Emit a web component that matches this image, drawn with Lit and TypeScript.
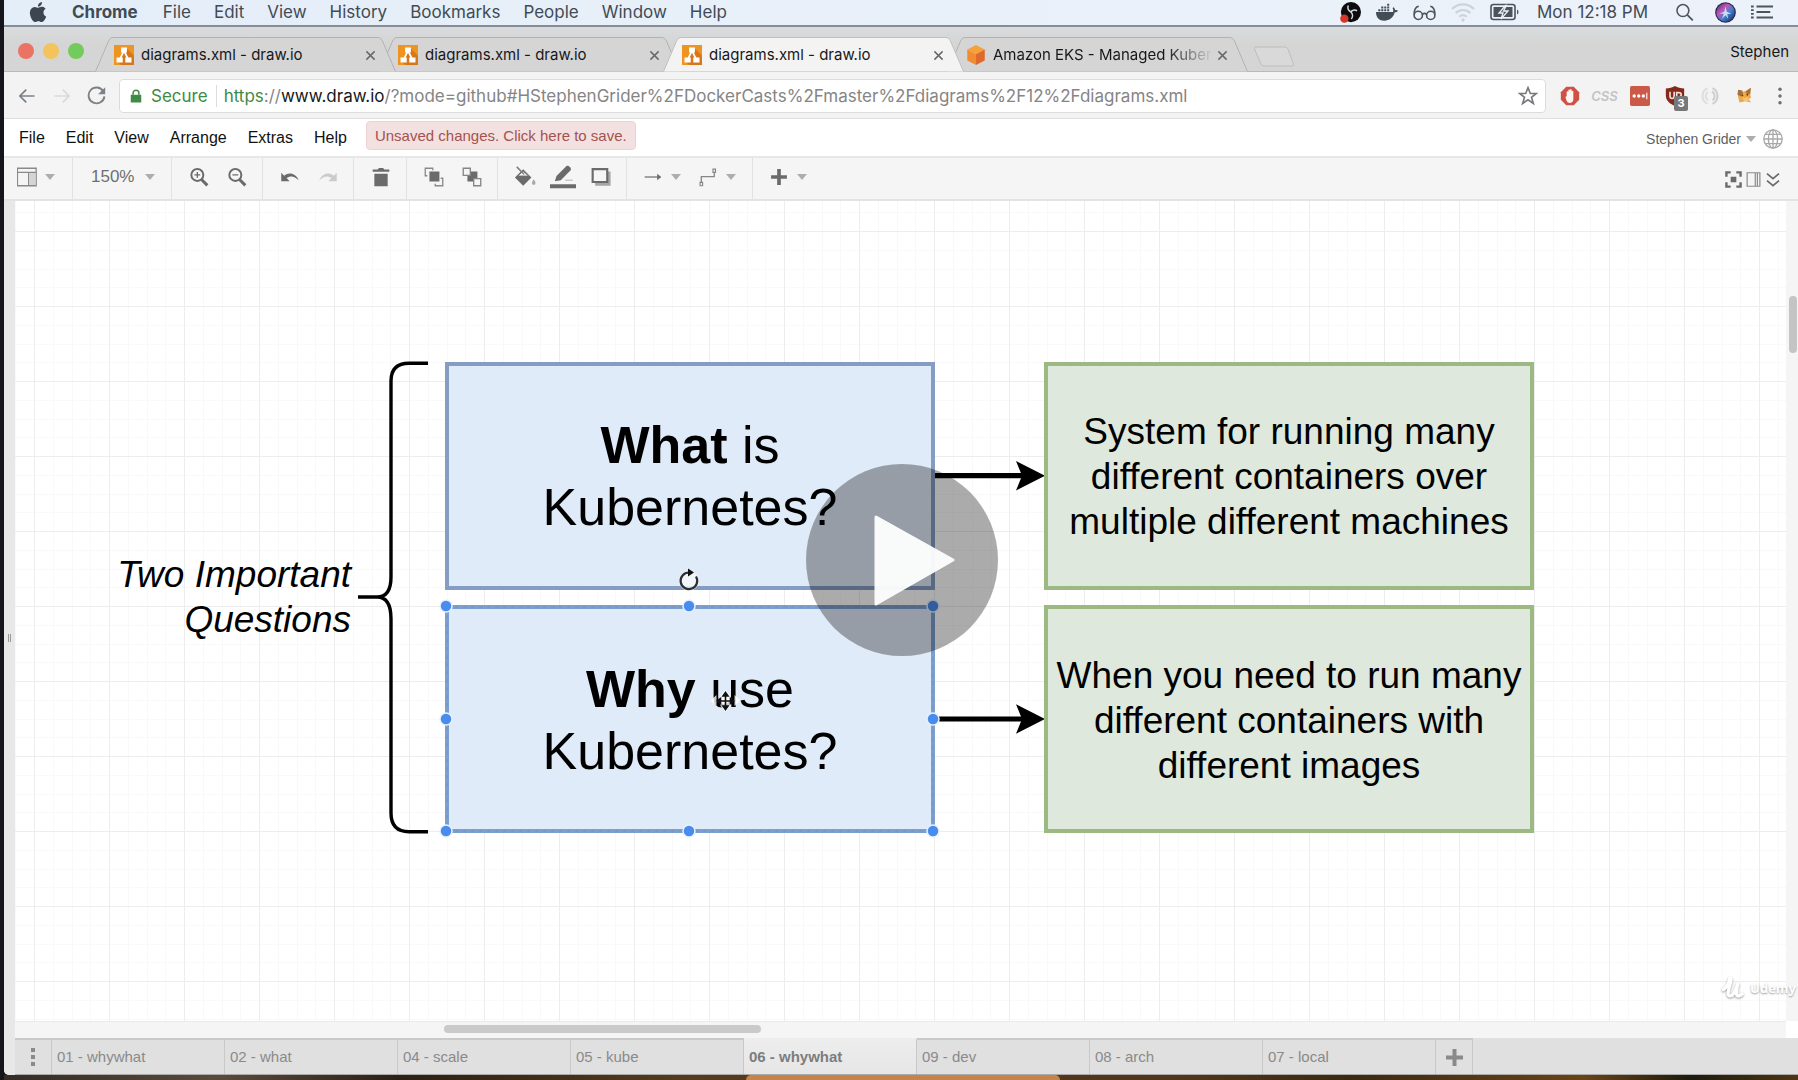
import { LitElement, html, svg, css } from "lit";
import { customElement } from "lit/decorators.js";
import { classMap } from "lit/directives/class-map.js";

const caret = html`<svg class="caret" viewBox="0 0 12 8" aria-hidden="true"><path d="M1 1h10L6 7z" fill="#adadad" /></svg>`;

const icon = (size: number, body: unknown) =>
  html`<svg width=${size} height=${size} viewBox="0 0 24 24" fill="none" aria-hidden="true">${body}</svg>`;

const G = "#6b6b6b";

const icons = {
  apple: svg`<path fill="#3d4650" d="M12.152 6.896c-.948 0-2.415-1.078-3.96-1.04-2.04.027-3.91 1.183-4.961 3.014-2.117 3.675-.546 9.103 1.519 12.09 1.013 1.454 2.208 3.09 3.792 3.039 1.52-.065 2.09-.987 3.935-.987 1.831 0 2.35.987 3.96.948 1.637-.026 2.676-1.48 3.676-2.948 1.156-1.688 1.636-3.325 1.662-3.415-.039-.013-3.182-1.221-3.22-4.857-.026-3.04 2.48-4.494 2.597-4.559-1.429-2.09-3.623-2.324-4.39-2.376-2-.156-3.675 1.09-4.61 1.09zM15.53 3.83c.843-1.012 1.4-2.427 1.245-3.83-1.207.052-2.662.805-3.532 1.818-.78.896-1.454 2.338-1.273 3.714 1.338.104 2.715-.688 3.559-1.701" />`,
  obs: svg`<circle cx="12.500" cy="11.500" r="11.500" fill="#0c0c0e" /><path d="M9.500 4c-1.500 3 0 6 3 7.500M19.500 10c-3-1.500-6-.5-7 1.500M13 19.500c2-2.500 1.500-6-.5-8" stroke="#d5d9de" stroke-width="1.800" /><circle cx="5" cy="19" r="4.800" fill="#d8352a" />`,
  docker: svg`<path fill="#434d57" d="M0 12h18.600c.5-1.500.3-3-.6-4l1-1.200c1.200.8 1.700 1.800 1.800 3 1.200-.2 2.300 0 3.200.8-.7 1.200-2 1.800-3.500 1.800C18.800 18.500 14.500 21.500 9 21.500 3.500 21.500 0 18.500 0 12z" /><path stroke="#434d57" stroke-width="2.200" d="M2.500 10h2.300M5.700 10H8M9 10h2.200M12.200 10h2.200M5.700 7H8M9 7h2.200M12.200 7h2.200M12.200 4h2.200" />`,
  glasses: svg`<g stroke="#4b545d" stroke-width="1.700"><circle cx="5.500" cy="15" r="4.300" /><circle cx="18.500" cy="15" r="4.300" /><path d="M9.800 14c1.200-1.200 3.200-1.200 4.400 0M1.200 14c0-4 1.500-8 4.800-8.500M22.800 14c0-4-1.500-8-4.800-8.500" /></g>`,
  wifi: svg`<g stroke="#cdd3da" stroke-width="2.200"><path d="M1 9c6.500-6.200 15.500-6.200 22 0M4.700 13c4.300-4 10.300-4 14.600 0M8.300 16.800c2.200-2 5.200-2 7.400 0" /></g><path d="M12 17.800l2 2.200-2 2.200-2-2.200z" fill="#cdd3da" />`,
  search: svg`<circle cx="10" cy="9.500" r="7.500" stroke="#4f5860" stroke-width="2" /><path d="M15.500 15l7 7" stroke="#4f5860" stroke-width="2.300" />`,
  siri: svg`<defs><linearGradient id="s" x1="0" y1="0" x2="1" y2="1"><stop offset="0" stop-color="#3b2a6b" /><stop offset=".35" stop-color="#c158b8" /><stop offset=".6" stop-color="#3f7fd0" /><stop offset="1" stop-color="#1c2350" /></linearGradient></defs><circle cx="12" cy="12" r="11.800" fill="#23244a" /><circle cx="12" cy="12" r="10.500" fill="url(#s)" /><path d="M12 5l1.500 6 5.500 2.500-5 .2 1 5.500L12 15l-4 4 2-5.500-5-.5 5.500-2z" fill="#d8f0fb" opacity=".85" />`,
  list: svg`<path d="M6 6h18M6 12h15M6 18h18" stroke="#4b545d" stroke-width="2.400" /><path d="M0 6h3M0 10h3M0 14h3M0 18h3" stroke="#4b545d" stroke-width="2" />`,
  back: svg`<path d="M22 12H3M11 3.500L2.500 12l8.500 8.500" stroke="#7d8186" stroke-width="2.300" />`,
  forward: svg`<path d="M2 12h19M13 3.500l8.500 8.500-8.500 8.500" stroke="#dadada" stroke-width="2.300" />`,
  reload: svg`<path d="M20.500 6.500A10 10 0 1 0 22 13" stroke="#7d8186" stroke-width="2.400" /><path d="M23 1.500v9h-9z" fill="#7d8186" />`,
  lock: svg`<path d="M3 10h18v13H3z" fill="#3f8a44" /><path d="M7 10V7a5 5 0 0 1 10 0v3" stroke="#3f8a44" stroke-width="2.600" />`,
  star: svg`<path d="M12 2l2.800 7h7.200l-5.800 4.500 2.200 7.500-6.400-4.500-6.400 4.500 2.200-7.500L2 9h7.200z" stroke="#77797c" stroke-width="2" />`,
  adblock: svg`<path d="M7.500 1h9L23 7.500v9L16.500 23h-9L1 16.500v-9z" fill="#cf5145" /><path d="M6.500 13l1.500-.8V7.500c0-1.500 2-1.500 2 0V5.200c0-1.500 2-1.500 2 0v-.5c0-1.500 2-1.500 2 0v2c0-1.500 2-1.500 2 0V16c0 3-2 4.500-4.500 4.500C8.500 20.500 7.500 17 6.500 13z" fill="#fdf3f1" />`,
  dots3: svg`<rect x="0" y="0" width="24" height="24" rx="2" fill="#cb5a49" /><g fill="#fff"><circle cx="5" cy="12" r="2" /><circle cx="10.500" cy="12" r="2" /><circle cx="16" cy="12" r="2" /><path d="M19.500 8h1.300v8h-1.300z" /></g>`,
  shield: svg`<path d="M12 0c3 2 7 3 11 3v8c0 6-4 10-11 13C5 21 1 17 1 11V3c4 0 8-1 11-3z" fill="#86281b" /><path d="M6 7v5c0 4 5 4 5 0V7M14 16V8h2.500c4 0 4 5 0 5H14" stroke="#f0dcd8" stroke-width="2" />`,
  swirl: svg`<path d="M9 2.500C1 6.500 1 17.500 9 21.500M9.500 7c-4 3-3.500 8 .5 10.500" stroke="#dedede" stroke-width="2.500" /><path d="M15 2.500c8 4 8 15 0 19M14.500 6.500c4 3 4 8 .5 11" stroke="#cfcfcf" stroke-width="2.500" />`,
  fox: svg`<path d="M3 5l6 2 6-2 6-4-1 8 1 6-3 2 3 5-8-2-8 2-2-8z" fill="#eda945" /><path d="M3 4l6 1 1 6-4 2-4-2zM14 6l7-5-1 9-5 1z" fill="#a8713c" /><path d="M8 14l4 2 5-2 1 5-6 1z" fill="#f4c67c" /><circle cx="9" cy="12" r="1.200" fill="#4b3a2a" /><circle cx="16" cy="11" r="1.200" fill="#4b3a2a" />`,
  more: svg`<g fill="#6c6f73"><circle cx="12" cy="3" r="2.300" /><circle cx="12" cy="12" r="2.300" /><circle cx="12" cy="21" r="2.300" /></g>`,
  globe: svg`<g stroke="#a9a9a9" stroke-width="1.600"><circle cx="12" cy="12" r="11" /><ellipse cx="12" cy="12" rx="5.500" ry="11" /><path d="M12 1v22M1 12h22M3 6.500h18M3 17.500h18" /></g>`,
  close: svg`<path d="M3 3l18 18M21 3L3 21" stroke="#66696c" stroke-width="3.200" />`,
  drawio: svg`<path d="M0 0h24v24H0z" fill="#ee9420" /><path d="M15 4l9 9v11H9l-6-5z" fill="#d8771a" /><path d="M12 7L7 17M12 7l5 10" stroke="#fff" stroke-width="2.200" /><path d="M8.500 3h7v6h-7zM3 15h7.500v6H3zM13.500 15H21v6h-7.500z" fill="#fff" />`,
  cube: svg`<path d="M12 0l10.500 5.500L12 11 1.500 5.500z" fill="#f6a13a" /><path d="M1.500 5.500L12 11v13L1.500 18.500z" fill="#f28c33" /><path d="M22.500 5.500L12 11v13l10.500-5.500z" fill="#dd6a2c" />`,
  sidebar: svg`<path d="M.5 1.500h22.500v21H.5zM.5 6.500H23M14 6.500v16" stroke="#8a8a8a" stroke-width="1.600" /><path d="M14.800 7.300h7.400v14.400h-7.400z" fill="#d5d5d5" />`,
  zoomIn: svg`<circle cx="10" cy="9.500" r="7.200" stroke="${G}" stroke-width="2.400" /><path d="M15 15l7 7" stroke="${G}" stroke-width="3.600" /><path d="M10 6v7M6.500 9.500h7" stroke="${G}" stroke-width="1.600" />`,
  zoomOut: svg`<circle cx="10" cy="9.500" r="7.200" stroke="${G}" stroke-width="2.400" /><path d="M15 15l7 7" stroke="${G}" stroke-width="3.600" /><path d="M6.500 9.500h7" stroke="${G}" stroke-width="1.600" />`,
  undo: svg`<path d="M1.500 7v10h10l-3.600-3.700c4.500-3.300 9.500-2.500 14.600 2.700C19 7.500 11 5.500 5 10.500z" fill="${G}" />`,
  redo: svg`<path d="M22.500 7v10h-10l3.600-3.700C11.600 10 6.600 10.800 1.500 16 5 7.500 13 5.500 19 10.500z" fill="#cbcbcb" />`,
  trash: svg`<path d="M4 8h16v15H4zM2 3h6l1.500-1.800h5L16 3h6v2.600H2z" fill="${G}" />`,
  front: svg`<path d="M6.500 5.500h12v12h-12z" fill="${G}" /><path d="M4 10.500H1.500v-9h9V4M20 13.500h2.500v9h-9V20" stroke="#8a8a8a" stroke-width="1.600" />`,
  toBack: svg`<path d="M6.500 5.500h12v12h-12z" fill="${G}" /><path d="M1.500 1.500h8.500V10H1.500zM14 14h8.500v8.500H14z" fill="#f5f5f5" stroke="#858585" stroke-width="1.600" />`,
  bucket: svg`<path d="M10 3.500L19 12.500 10 21.500 1 12.500z" fill="${G}" /><path d="M10 5.500l6 5.500H4z" fill="#f0f0f0" stroke="${G}" stroke-width="1" /><path d="M3 1l8 8" stroke="#7f7f7f" stroke-width="1.700" /><path d="M21.500 14.500c3 4 2 6 0 6s-3-2 0-6z" fill="#a9a9a9" />`,
  pencil: svg`<path d="M4.500 16l1.500-5L15 2c1.500-1.500 5.500 1.500 4 3.700L10 15z" fill="${G}" /><path d="M14 15h7" stroke="#c9c9c9" stroke-width="1.500" /><path d="M0 20.500h24" stroke="${G}" stroke-width="3.600" />`,
  shadow: svg`<path d="M5 5.500h18.500v17H5z" fill="#a6a6a6" /><path d="M2 2.500h17.500v15.500H2z" fill="#f5f5f5" stroke="${G}" stroke-width="2.600" />`,
  arrow: svg`<path d="M2 12h17" stroke="#868686" stroke-width="1.600" /><path d="M17 8l5 4-5 4z" fill="${G}" />`,
  waypoint: svg`<path d="M4 19v-7.500h15.500V6" stroke="#868686" stroke-width="1.600" /><path d="M2.500 18.500h3v4h-3zM18 2.500h3v4h-3z" stroke="#868686" stroke-width="1.400" />`,
  plus: svg`<path d="M12 2.500v19M2.500 12h19" stroke="${G}" stroke-width="4.400" />`,
  full: svg`<path d="M2 8V2h6M16 2h6v6M22 16v6h-6M8 22H2v-6" stroke="${G}" stroke-width="3.400" /><path d="M8 8h8v8H8z" fill="${G}" />`,
  panel: svg`<path d="M3 2.500h18v19H3zM14.500 2.500v19M17.500 2.500v19" stroke="#8a8a8a" stroke-width="1.700" />`,
  chevrons: svg`<path d="M3 2.500l9 7.500 9-7.500M3 13l9 7.500 9-7.500" stroke="${G}" stroke-width="2.600" />`,
};

const TABS = [
  { title: "diagrams.xml - draw.io", icon: icons.drawio },
  { title: "diagrams.xml - draw.io", icon: icons.drawio },
  { title: "diagrams.xml - draw.io", icon: icons.drawio, active: true },
  { title: "Amazon EKS - Managed Kuber", icon: icons.cube, fade: true },
];

const PAGES = ["01 - whywhat", "02 - what", "04 - scale", "05 - kube", "06 - whywhat", "09 - dev", "08 - arch", "07 - local"];

@customElement("mac-menubar")
class MacMenubar extends LitElement {
  static styles = css`
    :host { display: block; }
    .bar {
      display: flex; align-items: center; height: 25px; box-sizing: content-box; padding: 0 25px 0 24px;
      background: linear-gradient(90deg, #e4eef8, #edf2fa); border-bottom: 2px solid #858d96;
      font: 17px/22px Inter, sans-serif; color: #414b55;
    }
    .menus { display: flex; gap: 23px; flex: 1; margin-left: 24px; }
    button { border: 0; padding: 0 0 1px; background: none; font: inherit; color: inherit; display: flex; align-items: center; }
    .app { font-weight: 700; margin-right: 2px; }
    .status { display: flex; align-items: center; gap: 15px; }
    .clock { margin: 0 12px 0 2px; padding-bottom: 1px; }
    .find { margin-right: 6px; }
  `;
  render() {
    return html`<header class="bar">
      <button aria-label="Apple menu">${icon(20, icons.apple)}</button>
      <nav class="menus">
        ${["Chrome", "File", "Edit", "View", "History", "Bookmarks", "People", "Window", "Help"].map(
          (m, i) => html`<button class=${classMap({ app: i === 0 })}>${m}</button>`
        )}
      </nav>
      <div class="status">
        <button aria-label="Recorder">${icon(21, icons.obs)}</button>
        <button aria-label="Docker">${icon(22, icons.docker)}</button>
        <button aria-label="Reading mode">${icon(23, icons.glasses)}</button>
        <button aria-label="Wi-Fi">${icon(24, icons.wifi)}</button>
        <button aria-label="Battery">
          <svg width="30" height="18" viewBox="0 0 30 18" fill="none">
            <rect x="1" y="1.500" width="24" height="15" rx="2.500" stroke="#4b545d" stroke-width="1.600" />
            <path d="M3.500 4h19v10h-19z" fill="#4b545d" />
            <path d="M15.500 2.500l-6.500 7.500h4l-2 6 7-8h-4.500l3-5.500z" fill="#4b545d" stroke="#e9f0f9" stroke-width="1.300" />
            <path d="M27 6.500c2 1 2 4 0 5z" fill="#4b545d" />
          </svg>
        </button>
        <span class="clock">Mon 12:18 PM</span>
        <button class="find" aria-label="Spotlight">${icon(19, icons.search)}</button>
        <button aria-label="Siri">${icon(21, icons.siri)}</button>
        <button aria-label="Notifications">${icon(22, icons.list)}</button>
      </div>
    </header>`;
  }
}

@customElement("browser-chrome")
class BrowserChrome extends LitElement {
  static styles = css`
    :host { display: block; font-family: Inter, sans-serif; }
    button { border: 0; padding: 0; background: none; display: flex; align-items: center; justify-content: center; font: inherit; color: inherit; }
    .strip {
      display: flex; align-items: flex-end; height: 44px; padding-right: 9px; border-bottom: 1px solid #b9b9b9;
      background: linear-gradient(#d9dbdd, #d5d5d5 40%); position: relative; border-radius: 5px 0 0 0;
    }
    .lights { display: flex; gap: 9px; align-self: center; padding: 3px 11px 0 14px; }
    .light { width: 16px; height: 16px; border-radius: 50%; }
    .red { background: #eb7366; } .amber { background: #f3c45b; } .green { background: #74cb5d; }
    .tab { position: relative; display: flex; align-items: center; box-sizing: border-box; width: 301px; height: 35px; margin: 0 -17px -1px 0; padding: 1px 18px 0 19px; z-index: 1; }
    .tab.first { z-index: 2; }
    .tab.active { z-index: 3; }
    .shape { position: absolute; inset: 0; width: 100%; height: 100%; fill: #d5d5d5; stroke: #b2b2b2; }
    .active .shape { fill: #f3f3f3; stroke: #c0c0c0; }
    .title, .fav, .close { position: relative; }
    .fav { display: flex; margin-right: 7px; }
    .title { flex: 1; font-size: 15px; line-height: 20px; color: #16181a; white-space: nowrap; }
    .fade .title { -webkit-mask-image: linear-gradient(90deg, #000 78%, transparent 100%); mask-image: linear-gradient(90deg, #000 78%, transparent 100%); }
    .close { width: 16px; height: 20px; }
    .newtab { margin: 0 0 3px 22px; }
    .profile { margin: 0 0 9px auto; font-size: 15px; line-height: 20px; color: #16181a; }
    .bar { display: flex; align-items: center; box-sizing: border-box; height: 47px; background: #f3f3f3; border-bottom: 1px solid #dedede; padding: 1px 1px 0 5px; }
    .nav { width: 35px; height: 34px; }
    .omni { flex: 1; display: flex; align-items: center; min-width: 0; height: 32px; margin: 0 6px 0 5px; border: 1px solid #dcdcdc; border-radius: 4px; background: #fff; padding: 0 7px 0 9px; font-size: 17px; line-height: 24px; }
    .secure { display: flex; align-items: center; gap: 8px; color: #3f8a44; padding-right: 8px; margin-right: 7px; border-right: 1px solid #dcdcdc; height: 22px; }
    .url { flex: 1; color: #858585; white-space: nowrap; overflow: hidden; outline: 0; }
    .scheme { color: #3f8a44; }
    .host { color: #16181a; }
    .ext { position: relative; width: 35px; height: 34px; }
    .css { font-size: 13px; font-style: italic; font-weight: 600; color: #c3c3c3; }
    .badge { position: absolute; left: 17px; top: 17px; width: 14px; height: 15px; border-radius: 2px; background: #777; color: #fff; font: bold 11px/15px Inter, sans-serif; text-align: center; }
  `;
  render() {
    return html`
      <div class="strip">
        <div class="lights"><span class="light red"></span><span class="light amber"></span><span class="light green"></span></div>
        ${TABS.map(
          (t, i) => html`<div class=${classMap({ tab: true, first: i === 0, active: !!t.active, fade: !!t.fade })}>
            <svg class="shape" viewBox="0 0 301 35" preserveAspectRatio="none"><path d="M.5 34.500L14 3Q15.500 .5 18 .5H283Q285.500 .5 287 3L300.500 34.500" /></svg>
            <span class="fav">${icon(20, t.icon)}</span>
            <span class="title">${t.title}</span>
            <button class="close" aria-label="Close tab">${icon(11, icons.close)}</button>
          </div>`
        )}
        <button class="newtab" aria-label="New tab">
          <svg width="42" height="22" viewBox="0 0 42 22"><path d="M3 1h29q2 0 3 2l5.500 15q.5 2-1.500 2H11q-2 0-3-2L1.500 3Q1 1 3 1z" fill="#d9d9d9" stroke="#bdbdbd" /></svg>
        </button>
        <button class="profile">Stephen</button>
      </div>
      <div class="bar">
        <button class="nav" aria-label="Back">${icon(18, icons.back)}</button>
        <button class="nav" aria-label="Forward">${icon(18, icons.forward)}</button>
        <button class="nav" aria-label="Reload">${icon(19, icons.reload)}</button>
        <div class="omni">
          <span class="secure">${icon(14, icons.lock)}Secure</span>
          <div class="url" role="textbox" aria-label="Address" contenteditable="true"><span class="scheme">https</span>://<span class="host">www.draw.io</span>/?mode=github#HStephenGrider%2FDockerCasts%2Fmaster%2Fdiagrams%2F12%2Fdiagrams.xml</div>
          <button aria-label="Bookmark">${icon(20, icons.star)}</button>
        </div>
        <button class="ext" aria-label="Ad blocker">${icon(20, icons.adblock)}</button>
        <button class="ext css">CSS</button>
        <button class="ext" aria-label="Passwords">${icon(20, icons.dots3)}</button>
        <button class="ext" aria-label="Shield">${icon(20, icons.shield)}<span class="badge">3</span></button>
        <button class="ext" aria-label="Sync">${icon(20, icons.swirl)}</button>
        <button class="ext" aria-label="Cat">${icon(17, icons.fox)}</button>
        <button class="ext" aria-label="More">${icon(18, icons.more)}</button>
      </div>`;
  }
}

@customElement("editor-bars")
class EditorBars extends LitElement {
  static styles = css`
    :host { display: block; font-family: "Liberation Sans", Arial, sans-serif; }
    button { border: 0; padding: 0; background: none; display: flex; align-items: center; justify-content: center; font: inherit; color: inherit; }
    .caret { width: 12px; height: 8px; }
    .menu { display: flex; align-items: center; height: 37px; padding: 0 15px; background: #fff; border-bottom: 2px solid #e7e7e7; font-size: 16px; line-height: 20px; color: #111; }
    nav { display: flex; gap: 21px; }
    .save { align-self: flex-start; margin: 2px 0 0 19px; height: 29px; padding: 0 8px; border: 1px solid #ecd3d3; border-radius: 4px; background: #f2e1e0; color: #a5524f; font-size: 15px; }
    .user { margin-left: auto; padding-top: 2px; gap: 4px; font-size: 14px; color: #5f5f5f; }
    .lang { margin-left: 6px; padding-top: 2px; }
    .tools { display: flex; height: 41px; background: #f5f5f5; border-bottom: 2px solid #e3e3e3; }
    .group { display: flex; align-items: center; padding: 0 6px 4px 8px; border-right: 1px solid #e2e2e2; }
    .tool { width: 38px; height: 36px; }
    .drops { padding: 0 15px 4px 14px; gap: 14px; }
    .layout { padding-left: 11px; padding-right: 16px; }
    .last { border: 0; }
    .drop { gap: 5px; height: 36px; }
    .drop svg:first-child { margin: 0 2px; }
    .scale { padding: 0 15px 4px 18px; gap: 9px; }
    select { appearance: none; border: 0; padding: 0; margin: 0; background: none; font: 17px/22px "Liberation Sans", Arial, sans-serif; color: #6f6f6f; }
    .right { display: flex; align-items: center; gap: 3px; margin: 2px 17px 0 auto; }
  `;
  private tool(label: string, body: unknown, size = 20) {
    return html`<button class="tool" aria-label=${label}>${icon(size, body)}</button>`;
  }
  private drop(label: string, body: unknown) {
    return html`<button class="drop" aria-label=${label}>${icon(20, body)}${caret}</button>`;
  }
  render() {
    return html`
      <div class="menu">
        <nav>${["File", "Edit", "View", "Arrange", "Extras", "Help"].map((m) => html`<button>${m}</button>`)}</nav>
        <button class="save">Unsaved changes. Click here to save.</button>
        <button class="user">Stephen Grider ${caret}</button>
        <button class="lang" aria-label="Language">${icon(20, icons.globe)}</button>
      </div>
      <div class="tools">
        <div class="group drops layout">${this.drop("View", icons.sidebar)}</div>
        <div class="group scale"><select aria-label="Zoom"><option>150%</option></select>${caret}</div>
        <div class="group">${this.tool("Zoom in", icons.zoomIn)}${this.tool("Zoom out", icons.zoomOut)}</div>
        <div class="group">${this.tool("Undo", icons.undo)}${this.tool("Redo", icons.redo)}</div>
        <div class="group">${this.tool("Delete", icons.trash)}</div>
        <div class="group">${this.tool("To front", icons.front)}${this.tool("To back", icons.toBack)}</div>
        <div class="group">${this.tool("Fill colour", icons.bucket, 22)}${this.tool("Line colour", icons.pencil, 26)}${this.tool("Shadow", icons.shadow)}</div>
        <div class="group drops">${this.drop("Connection", icons.arrow)}${this.drop("Waypoints", icons.waypoint)}</div>
        <div class="group drops last">${this.drop("Insert", icons.plus)}</div>
        <div class="right">
          <button aria-label="Fullscreen">${icon(17, icons.full)}</button>
          <button aria-label="Format panel">${icon(17, icons.panel)}</button>
          <button aria-label="Collapse">${icon(16, icons.chevrons)}</button>
        </div>
      </div>`;
  }
}

@customElement("diagram-canvas")
class DiagramCanvas extends LitElement {
  static styles = css`
    :host { display: block; position: relative; overflow: hidden; background: #fff; font-family: "Liberation Sans", Arial, sans-serif; color: #000; }
    .layer { position: absolute; inset: 0; width: 100%; height: 100%; }
    .node { position: absolute; box-sizing: border-box; width: 490px; height: 228px; border: 4px solid; display: flex; align-items: center; justify-content: center; text-align: center; }
    .ask { left: 430px; background: #e0ebf9; border-color: #859dc3; font-size: 52px; line-height: 62px; }
    .answer { left: 1029px; background: #dee8dc; border-color: #9cb982; font-size: 37px; line-height: 45px; }
    .one { top: 161px; }
    .two { top: 404px; padding-top: 2px; }
    .picked { border-color: #7a9fd2; }
    .label { position: absolute; left: 85px; top: 351px; width: 251px; text-align: right; font-size: 37px; line-height: 45px; font-style: italic; }
    .play { position: absolute; left: 791px; top: 263px; width: 192px; height: 192px; border: 0; padding: 0; border-radius: 50%; background: rgba(0, 0, 0, 0.33); }
  `;
  render() {
    const handles = [
      [431, 405], [674, 405], [918, 405],
      [431, 518], [918, 518],
      [431, 630], [674, 630], [918, 630],
    ];
    return html`
      <svg class="layer" aria-hidden="true">
        <defs>
          <pattern id="grid" x="19" y="30" width="75" height="75" patternUnits="userSpaceOnUse">
            <path d="M19.500 0v75M38.500 0v75M56.500 0v75M0 19.500h75M0 38.500h75M0 56.500h75" stroke="#f9f9f9" />
            <path d="M.5 0v75M0 .5h75" stroke="#ededed" />
          </pattern>
        </defs>
        <rect width="100%" height="100%" fill="url(#grid)" />
        <path d="M413 162.300H394Q376 162.300 376 180V376Q376 396 362 396H343M362 396Q376 396 376 418V612Q376 630.700 394 630.700H413" fill="none" stroke="#000" stroke-width="3.400" />
        <path d="M920 274.700H1010M920 518H1010" stroke="#000" stroke-width="5.200" />
        <path d="M1030 274.700L1001 289.500L1007 274.700L1001 260zM1030 518L1001 532.800L1007 518L1001 503.300z" />
      </svg>
      <div class="label">Two Important Questions</div>
      <div class="node ask one"><div><b>What</b> is<br />Kubernetes?</div></div>
      <div class="node ask two picked"><div><b>Why</b> use<br />Kubernetes?</div></div>
      <div class="node answer one"><div>System for running many<br />different containers over<br />multiple different machines</div></div>
      <div class="node answer two"><div>When you need to run many<br />different containers with<br />different images</div></div>
      <svg class="layer" aria-hidden="true">
        <rect x="432" y="406" width="486" height="224" fill="none" stroke="#8392ad" stroke-dasharray="4 4" />
        ${handles.map(([x, y]) => svg`<circle cx=${x} cy=${y} r="6" fill="#4a8bee" stroke="#e6f1fd" stroke-width="1.500" />`)}
        <circle cx="674" cy="380" r="10" fill="#f6f8fa" opacity=".8" />
        <path d="M681 375.500a8.300 8.300 0 1 1-7-4" fill="none" stroke="#2b2f33" stroke-width="2.200" />
        <path d="M673 367.500l6 4-6 4z" fill="#111" />
        <path d="M710.500 489l5 6v4h4v-5l6 5.500-6 5.500v-4h-4v4l-5 6-5-6v-4h-4v4l-6-5.500 6-5.500v5h4v-4z" fill="#fff" opacity=".8" />
        <path d="M710.500 493v14M703.500 500h14M708 495l2.500-3.500 2.500 3.500zM708 505l2.500 3.500 2.500-3.500zM705.500 497.500L702 500l3.500 2.500zM715.500 497.500L719 500l-3.500 2.500z" fill="#111" stroke="#111" stroke-width="1.600" />
      </svg>
      <button class="play" aria-label="Play video">
        <svg width="192" height="192" viewBox="0 0 192 192"><path d="M70 53L147 96 70 140z" fill="#fff" stroke="#fff" stroke-width="3" stroke-linejoin="round" opacity=".95" /></svg>
      </button>`;
  }
}

@customElement("app-root")
class AppRoot extends LitElement {
  static styles = css`
    :host { display: block; }
    .desk { display: flex; flex-direction: column; height: 100vh; padding-left: 4px; box-sizing: border-box; background: #14161b; overflow: hidden; }
    .window { flex: 1; min-height: 0; display: flex; flex-direction: column; background: #e0e0e0; border-radius: 0 0 0 5px; overflow: hidden; }
    .body { position: relative; flex: 1; min-height: 0; display: flex; }
    .split { width: 11px; background: #e8e8e8; display: flex; align-items: center; justify-content: center; gap: 1px; }
    .split i { width: 1px; height: 8px; background: #999; }
    .work { flex: 1; min-width: 0; display: flex; flex-direction: column; }
    .view { flex: 1; min-height: 0; display: flex; }
    diagram-canvas { flex: 1; }
    .vscroll { width: 12px; background: #f5f5f5; padding-top: 95px; box-sizing: border-box; }
    .vthumb { width: 8px; height: 57px; margin-left: 3px; border-radius: 4px; background: #c4c4c4; }
    .hscroll { height: 17px; box-sizing: border-box; background: #f5f5f5; border-top: 1px solid #e9e9e9; margin-right: 12px; padding: 3px 0 0 429px; }
    .hwrap { background: #fff; }
    .hthumb { width: 317px; height: 8px; border-radius: 4px; background: #cacaca; }
    .pages { display: flex; height: 37px; background: #e0e0e0; border-bottom: 1px solid #aaa; box-sizing: border-box; font: 15px/20px "Liberation Sans", Arial, sans-serif; color: #8a8a8a; }
    .page { box-sizing: border-box; width: 173px; padding: 0 5px; border: solid #c9c9c9; border-width: 2px 1px 0 0; background: none; font: inherit; color: inherit; text-align: left; }
    .dots, .add { width: 37px; padding: 0; display: flex; align-items: center; justify-content: center; }
    .current { font-weight: 700; background: linear-gradient(#ededed, #e6e6e6); border-top-color: #ededed; color: #7d7d7d; }
    .wood { height: 5px; display: flex; background: linear-gradient(90deg, #352b22, #5a4a3c 12%, #2c1f14 22%, #553c1e 38%, #50361a 66%, #3a2a12 75%, #6a4316 88%, #1d1b0e 94%, #4d3513); }
    .dock { width: 314px; margin-left: 742px; border-radius: 5px 5px 0 0; background: #c68448; }
    .mark { position: absolute; right: 2px; bottom: 76px; display: flex; align-items: center; gap: 5px; color: #fff; font: bold 13px/20px "Open Sans", sans-serif; text-shadow: 0 1px 2px rgba(0, 0, 0, 0.4); }
    .mark svg { filter: drop-shadow(0 1px 1px rgba(0, 0, 0, 0.4)); }
  `;
  render() {
    return html`<div class="desk">
      <mac-menubar></mac-menubar>
      <main class="window">
        <browser-chrome></browser-chrome>
        <editor-bars></editor-bars>
        <div class="body">
          <div class="split"><i></i><i></i></div>
          <div class="work">
            <div class="view">
              <diagram-canvas></diagram-canvas>
              <div class="vscroll"><div class="vthumb"></div></div>
            </div>
            <div class="hwrap"><div class="hscroll"><div class="hthumb"></div></div></div>
            <div class="pages">
              <button class="page dots" aria-label="Pages">
                <svg width="6" height="18" viewBox="0 0 6 18" fill="#8a8a8a"><path d="M1 0h4v4H1zM1 7h4v4H1zM1 14h4v4H1z" /></svg>
              </button>
              ${PAGES.map((p) => html`<button class=${classMap({ page: true, current: p.startsWith("06") })}>${p}</button>`)}
              <button class="page add" aria-label="Add page">
                <svg width="17" height="17" viewBox="0 0 17 17"><path d="M8.500 0v17M0 8.500h17" stroke="#8a8a8a" stroke-width="4" /></svg>
              </button>
            </div>
          </div>
          <div class="mark">
            <svg width="24" height="22" viewBox="0 0 24 22"><path d="M1 13C5 12 8 6 8.500 2 9 0 11 1 9.500 6 7 14 6 19 9 19c4 0 6-7 8-13-2 8-2 13 0 13 2 0 3-1 5-3" fill="none" stroke="#fff" stroke-width="3.200" /></svg>Udemy
          </div>
        </div>
      </main>
      <div class="wood"><div class="dock"></div></div>
    </div>`;
  }
}
